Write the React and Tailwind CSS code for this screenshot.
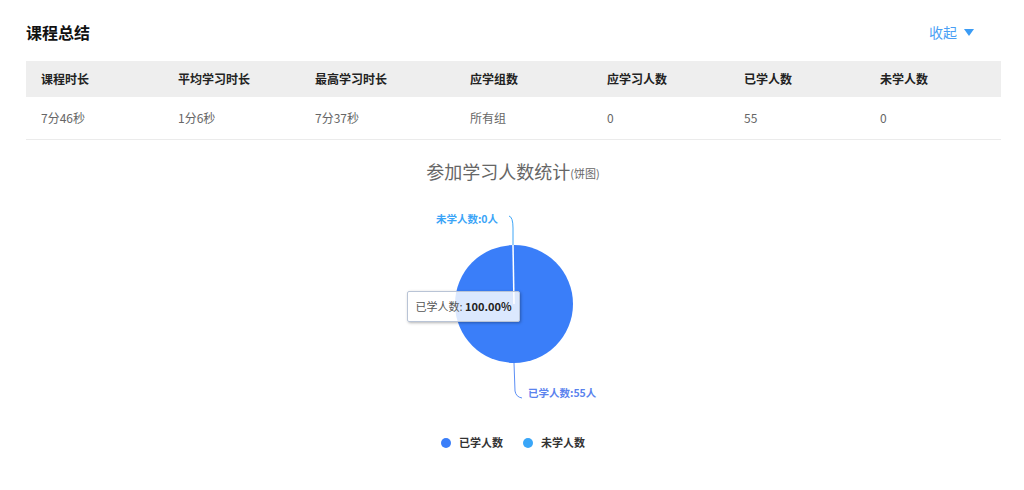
import React from "react";

const cols = [
  { h: "课程时长", v: "7分46秒", w: "w-[137px]" },
  { h: "平均学习时长", v: "1分6秒", w: "w-[137px]" },
  { h: "最高学习时长", v: "7分37秒", w: "w-[155px]" },
  { h: "应学组数", v: "所有组", w: "w-[137px]" },
  { h: "应学习人数", v: "0", w: "w-[137px]" },
  { h: "已学人数", v: "55", w: "w-[136px]" },
  { h: "未学人数", v: "0", w: "flex-1" },
];

export default function App() {
  return (
    <div
      className="w-[1024px] h-[490px] bg-white overflow-hidden"
      style={{ fontFamily: '"Noto Sans CJK SC", "Noto Sans", sans-serif' }}
    >
      <div className="flex items-center justify-between pl-[26px] pr-[50px] pt-[19px] h-[61px] pb-[16px]">
        <div className="text-[16px] font-bold text-[#111] leading-none">课程总结</div>
        <div className="flex items-center gap-[7px] text-[14px] text-[#4a9ff5] leading-none">
          <span>收起</span>
          <svg width="10" height="7" viewBox="0 0 10 7">
            <path d="M0 0 L10 0 L5 7 Z" fill="#3b9cf5" />
          </svg>
        </div>
      </div>
      <div className="mx-[26px] w-[975px]">
        <div className="flex h-[36px] items-center bg-[#eeeeee]">
          {cols.map((c) => (
            <div key={c.h} className={`${c.w} pl-[15px] text-[12px] font-bold text-[#222] leading-none`}>
              {c.h}
            </div>
          ))}
        </div>
        <div className="flex h-[43px] items-center border-b border-[#ebebeb]">
          {cols.map((c) => (
            <div key={c.h} className={`${c.w} pl-[15px] text-[12px] text-[#666] leading-none`}>
              {c.v}
            </div>
          ))}
        </div>
      </div>
      <div className="flex flex-col items-center">
        <div className="mt-[22px] flex items-end text-[#666] leading-none ml-[2px]">
          <span className="text-[18px]">参加学习人数统计</span>
          <span className="text-[11px] mb-[1px]">(饼图)</span>
        </div>
        <div className="relative w-[300px] h-[231px] mt-[10px] ml-[3px]">
          <svg width="300" height="231" viewBox="0 0 300 231">
            <circle cx="150" cy="114" r="59" fill="#3a7ef9" />
            <line x1="149" y1="55" x2="150" y2="114" stroke="#ffffff" strokeWidth="1.5" />
            <path d="M145 26 Q149 27 149 38 L149 55" fill="none" stroke="#3fa6f7" strokeWidth="1" />
            <text x="134" y="33" textAnchor="end" fontSize="10.5" fontWeight="700" fill="#3aa4f7">未学人数:0人</text>
            <path d="M150 173 L151 201 Q152 207 158 208" fill="none" stroke="#5b8ef5" strokeWidth="1" />
            <text x="164" y="207" fontSize="10.5" fontWeight="700" fill="#5a82ee">已学人数:55人</text>
          </svg>
          <div className="absolute left-[43px] top-[101px] w-[113px] h-[31px] flex items-center pl-[8px] bg-[rgba(255,255,255,0.82)] border border-[#b9c4d6] rounded-[2px] shadow-[1px_1px_3px_rgba(0,0,0,0.3)] text-[11px] leading-none whitespace-nowrap">
            <span className="text-[#555]">已学人数:&nbsp;</span>
            <span className="font-bold text-[#222]">100.00%</span>
          </div>
        </div>
        <div className="flex items-center mt-[16px] ml-[2px] text-[11px] font-bold text-[#333] leading-none">
          <div className="flex items-center gap-[8px]">
            <span className="w-[10px] h-[10px] rounded-full bg-[#3a7ef9]" />
            <span>已学人数</span>
          </div>
          <div className="flex items-center gap-[8px] ml-[20px]">
            <span className="w-[10px] h-[10px] rounded-full bg-[#39a6f8]" />
            <span>未学人数</span>
          </div>
        </div>
      </div>
    </div>
  );
}
